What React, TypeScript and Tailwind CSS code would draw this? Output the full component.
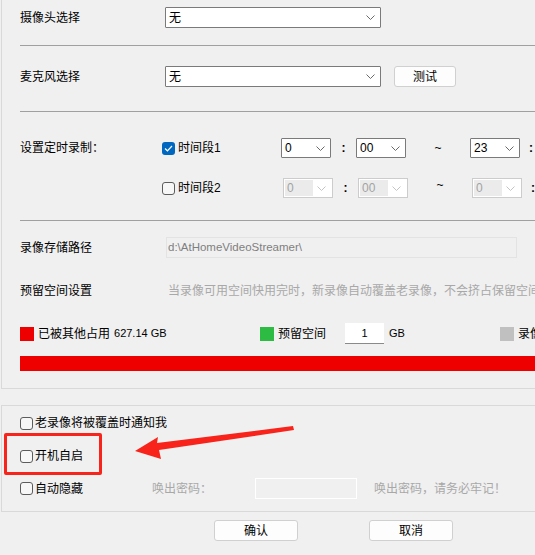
import React from "react";

const font = { fontFamily: '"Liberation Sans", "Noto Sans CJK SC", sans-serif' };

const Chevron = ({ disabled = false }: { disabled?: boolean }) => (
  <svg width="9" height="5" viewBox="0 0 9 5" className="flex-none">
    <path d="M0.5 0.5 L4.5 4.5 L8.5 0.5" fill="none" stroke={disabled ? "#c4c4c4" : "#6a6a6a"} strokeWidth="1" />
  </svg>
);

const Select = ({ value, className, disabled = false }: { value: string; className: string; disabled?: boolean }) =>
  disabled ? (
    <div className={`flex h-[20px] items-center justify-between border border-[#cccccc] bg-white pr-[6px] ${className}`}>
      <div className="ml-[1px] flex h-[16px] w-[28px] items-center bg-[#ebebeb] pl-[2px] text-[12px] text-[#a3a3a3]">{value}</div>
      <Chevron disabled />
    </div>
  ) : (
    <div className={`flex items-center justify-between rounded-[1px] border border-[#7a7a7a] bg-white pl-[3px] pr-[5px] text-[12px] text-black ${className}`}>
      <span>{value}</span>
      <Chevron />
    </div>
  );

const CheckBox = ({ checked = false }: { checked?: boolean }) =>
  checked ? (
    <div className="flex h-[13px] w-[13px] flex-none items-center justify-center rounded-[3px] bg-[#0067c0]">
      <svg width="9" height="7" viewBox="0 0 9 7">
        <path d="M1 3.5 L3.4 5.8 L8 1" fill="none" stroke="white" strokeWidth="1.2" />
      </svg>
    </div>
  ) : (
    <div className="h-[13px] w-[13px] flex-none rounded-[3px] border border-[#5c5c5c] bg-[#f7f7f7]" />
  );

const Divider = ({ className }: { className: string }) => (
  <div className={`ml-[18px] h-px flex-none bg-[#a0a0a0] ${className}`} />
);

const TimeRow = ({ index, checked, values, className }: { index: number; checked: boolean; values: string[]; className: string }) => (
  <div className={`flex h-[20px] flex-none items-center ${className}`}>
    <div className="w-[160px] flex-none pl-[18px]">{index === 1 ? "设置定时录制：" : ""}</div>
    <div className={`flex flex-none items-center ${checked ? "w-[119px]" : "w-[121px]"}`}>
      <CheckBox checked={checked} />
      <span className="ml-[3px]">时间段{index}</span>
    </div>
    <Select value={values[0]} disabled={!checked} className="h-[20px] w-[50px] flex-none" />
    <div className="w-[25px] flex-none text-center font-bold">:</div>
    <Select value={values[1]} disabled={!checked} className="h-[20px] w-[50px] flex-none" />
    <div className={`w-[64px] flex-none text-center ${checked ? "" : "-mt-[6px]"}`}>~</div>
    <Select value={values[2]} disabled={!checked} className="h-[20px] w-[50px] flex-none" />
    <div className="w-[22px] flex-none text-center font-bold">:</div>
    <Select value="00" disabled={!checked} className="h-[20px] w-[50px] flex-none" />
  </div>
);

export default function App() {
  return (
    <div className="relative flex h-[555px] w-[535px] flex-col overflow-hidden bg-[#f0f0f0] text-[12px] text-black" style={font}>
      {/* top settings panel */}
      <div className="ml-[1px] flex h-[389px] flex-none flex-col border-b border-l border-[#d9d9d9]">
        <div className="mt-[7px] flex h-[21px] flex-none items-center">
          <div className="w-[163px] flex-none pl-[18px]">摄像头选择</div>
          <Select value="无" className="h-[21px] w-[216px] flex-none" />
        </div>
        <Divider className="mt-[17px]" />

        <div className="mt-[20px] flex h-[21px] flex-none items-center">
          <div className="w-[163px] flex-none pl-[18px]">麦克风选择</div>
          <Select value="无" className="h-[21px] w-[216px] flex-none" />
          <button className="ml-[13px] h-[21px] w-[62px] flex-none rounded-[3px] border border-[#d0d0d0] bg-[#fdfdfd] text-[12px]">
            测试
          </button>
        </div>
        <Divider className="mt-[24px]" />

        <TimeRow index={1} checked values={["0", "00", "23"]} className="mt-[26px]" />
        <TimeRow index={2} checked={false} values={["0", "00", "0"]} className="mt-[20px]" />
        <Divider className="mt-[22px]" />

        <div className="mt-[16px] flex h-[21px] flex-none items-center">
          <div className="w-[164px] flex-none pl-[18px]">录像存储路径</div>
          <div className="flex h-[21px] w-[351px] flex-none items-center border border-[#e3e3e3] bg-[#f0f0f0] pl-[1px] text-[11.5px] text-[#7f7f7f]">
            d:\AtHomeVideoStreamer\
          </div>
        </div>

        <div className="mt-[23px] flex h-[20px] flex-none items-center whitespace-nowrap">
          <div className="w-[166px] flex-none pl-[18px]">预留空间设置</div>
          <div className="text-[#a8a8a8]">当录像可用空间快用完时，新录像自动覆盖老录像，不会挤占保留空间</div>
        </div>

        <div className="mt-[22px] flex h-[21px] flex-none items-center whitespace-nowrap pl-[18px]">
          <div className="flex w-[240px] flex-none items-center">
            <div className="h-[14px] w-[14px] flex-none bg-[#ee0000]" />
            <span className="ml-[4px]">已被其他占用</span>
            <span className="ml-[4px] text-[11px]">627.14 GB</span>
          </div>
          <div className="flex w-[240px] flex-none items-center">
            <div className="h-[14px] w-[14px] flex-none bg-[#2dbb44]" />
            <span className="ml-[4px] w-[67px] flex-none">预留空间</span>
            <div className="flex h-[21px] w-[39px] flex-none items-center justify-center border-b border-[#8a8a8a] bg-white text-[11px]">1</div>
            <span className="ml-[5px] text-[11px]">GB</span>
          </div>
          <div className="flex flex-none items-center">
            <div className="h-[14px] w-[14px] flex-none bg-[#c0c0c0]" />
            <span className="ml-[4px]">录像可用空间</span>
          </div>
        </div>

        <div className="ml-[18px] mt-[12px] h-[15px] flex-none bg-[#ee0000]" />
      </div>

      {/* bottom options box */}
      <div className="ml-[1px] mt-[16px] flex h-[107px] flex-none flex-col border-b border-l border-t border-[#d9d9d9]">
        <div className="mt-[7px] flex h-[20px] flex-none items-center pl-[18px]">
          <CheckBox />
          <span className="ml-[2px]">老录像将被覆盖时通知我</span>
        </div>
        <div className="mt-[13px] flex h-[20px] flex-none items-center pl-[18px]">
          <CheckBox />
          <span className="ml-[2px]">开机自启</span>
        </div>
        <div className="mt-[12px] flex h-[21px] flex-none items-center whitespace-nowrap">
          <div className="flex w-[150px] flex-none items-center pl-[18px]">
            <CheckBox />
            <span className="ml-[2px]">自动隐藏</span>
          </div>
          <span className="w-[103px] flex-none text-[#a8a8a8]">唤出密码：</span>
          <div className="h-[21px] w-[102px] flex-none border border-white bg-[#f0f0f0]" />
          <span className="ml-[17px] text-[#a8a8a8]">唤出密码，请务必牢记！</span>
        </div>
      </div>

      <div className="mt-[8px] flex flex-none gap-[71px] pl-[214px]">
        <button className="h-[21px] w-[84px] rounded-[3px] border border-[#d0d0d0] bg-[#fdfdfd] text-[12px]">确认</button>
        <button className="h-[21px] w-[84px] rounded-[3px] border border-[#d0d0d0] bg-[#fdfdfd] text-[12px]">取消</button>
      </div>

      {/* annotation overlay */}
      <div className="absolute left-[4px] top-[433px] h-[42px] w-[98px] rounded-[2px] border-[3px] border-[#f8231b]" />
      <svg className="absolute left-0 top-0" width="535" height="555" viewBox="0 0 535 555">
        <polygon points="135,451 158,437 157,443 293,426 294,430 159,450 161,459" fill="#f8231b" />
      </svg>
    </div>
  );
}
